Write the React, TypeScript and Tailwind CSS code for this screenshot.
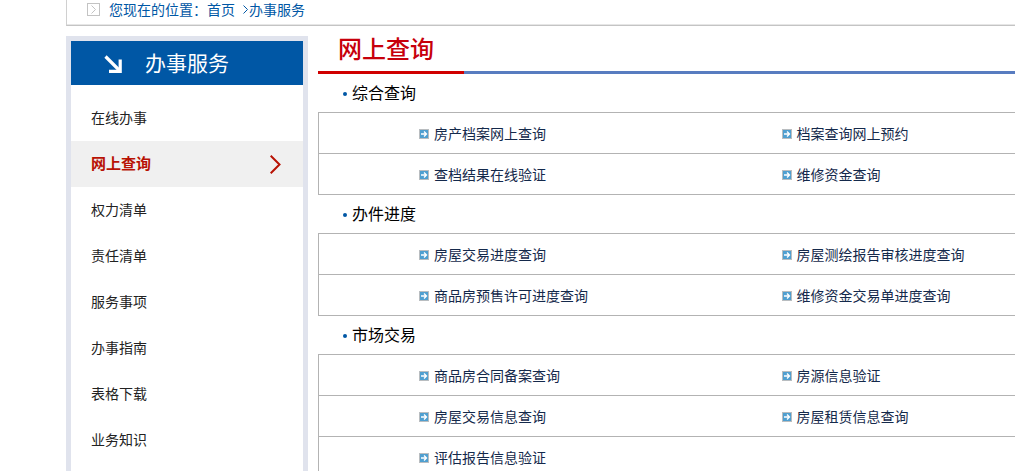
const menu = ["在线办事", "网上查询", "权力清单", "责任清单", "服务事项", "办事指南", "表格下载", "业务知识"];

const sections = [
  {
    title: "综合查询",
    rows: [
      ["房产档案网上查询", "档案查询网上预约"],
      ["查档结果在线验证", "维修资金查询"],
    ],
  },
  {
    title: "办件进度",
    rows: [
      ["房屋交易进度查询", "房屋测绘报告审核进度查询"],
      ["商品房预售许可进度查询", "维修资金交易单进度查询"],
    ],
  },
  {
    title: "市场交易",
    rows: [
      ["商品房合同备案查询", "房源信息验证"],
      ["房屋交易信息查询", "房屋租赁信息查询"],
      ["评估报告信息验证", ""],
    ],
  },
];

function ItemIcon() {
  return (
    <svg width="10" height="10" viewBox="0 0 10 10" className="shrink-0" aria-hidden="true">
      <rect width="10" height="10" fill="#b9bdc0" />
      <rect x="1" y="1" width="8" height="8" fill="#4f9fd0" />
      <path d="M2 5h5M5 2.5L7.5 5L5 7.5" stroke="#fff" strokeWidth="1.3" fill="none" />
    </svg>
  );
}

function Breadcrumb() {
  return (
    <nav className="flex h-[26px] items-start border-b border-l border-b-[#c4c4c4] border-l-[#d0d0d0] pl-5 text-sm/5 text-[#0057a5] shadow-[inset_0_-1px_0_#e6e6e6]">
      <svg width="13" height="13" viewBox="0 0 13 13" className="mt-[3px] mr-[9px] shrink-0" fill="none" stroke="#c3c3c3" aria-hidden="true">
        <rect x="0.5" y="0.5" width="12" height="12" />
        <path d="M4.5 2.5L8.5 6.5L4.5 10.5" />
      </svg>
      <span>您现在的位置：</span>
      <a href="#">首页</a>
      <svg width="5" height="9" viewBox="0 0 5 9" className="mt-[5px] mr-px ml-2 shrink-0" fill="none" stroke="#0057a5" aria-hidden="true">
        <path d="M0.5 0.5L4.5 4.5L0.5 8.5" />
      </svg>
      <a href="#">办事服务</a>
    </nav>
  );
}

function Sidebar() {
  return (
    <aside className="w-[242px] shrink-0 border-[5px] border-[#e0e3ed]">
      <h2 className="flex h-11 items-center bg-[#0057a5] pt-0.5 pl-[33px] text-[21px] text-white">
        <svg width="19" height="19" viewBox="0 0 19 19" className="mr-[22px]" fill="none" stroke="#fff" strokeWidth="3.2" aria-hidden="true">
          <path d="M1.5 1.5L15 15" />
          <path d="M16.2 4.5V16.3H5" />
        </svg>
        办事服务
      </h2>
      <ul className="pt-2.5 pb-5">
        {menu.map((name) =>
          name === "网上查询" ? (
            <li key={name}>
              <a href="#" className="flex h-[46px] items-center justify-between bg-[#f0f0f0] pr-[22px] pl-5 text-[15px] font-bold text-[#b81204]">
                {name}
                <svg width="11" height="19" viewBox="0 0 11 19" fill="none" stroke="#b81204" strokeWidth="2" aria-hidden="true">
                  <path d="M0.7 0.7L9.5 9.5L0.7 18.3" />
                </svg>
              </a>
            </li>
          ) : (
            <li key={name}>
              <a href="#" className="flex h-[46px] items-center pl-5 text-sm text-[#222]">
                {name}
              </a>
            </li>
          ),
        )}
      </ul>
    </aside>
  );
}

function ItemLink({ name }: { name: string }) {
  return (
    <a href="#" className="flex items-center gap-[5px] pl-[100px] whitespace-nowrap">
      <ItemIcon />
      {name}
    </a>
  );
}

export default function App() {
  return (
    <div className="min-h-screen overflow-x-hidden bg-white pl-[66px] font-['Liberation_Sans','Noto_Sans_CJK_SC',sans-serif]">
      <Breadcrumb />
      <div className="flex items-stretch gap-2.5 pt-2.5">
        <Sidebar />
        <main className="min-w-0 flex-1">
          <h1 className="flex h-[35px] items-start pt-0.5 pl-5 text-2xl/6 font-medium text-[#c7000b]">网上查询</h1>
          <div className="h-[3px] bg-[#587cc0]">
            <div className="h-full w-[146px] bg-[#d00000]" />
          </div>
          {sections.map((section) => (
            <section key={section.title}>
              <h2 className="flex h-[38px] items-center gap-[5px] pt-0.5 pl-[25px] text-base text-black">
                <span className="size-1 rounded-full bg-[#0057a5]" />
                {section.title}
              </h2>
              <table className="w-full table-fixed border-collapse border-y border-l border-[#b3b3b3] text-sm text-[#14294b]">
                <colgroup>
                  <col className="w-[363px]" />
                  <col />
                </colgroup>
                <tbody>
                  {section.rows.map(([left, right]) => (
                    <tr key={left} className="h-[41px] border-b border-[#b3b3b3]">
                      <td className="px-0 pt-0.5 pb-0">
                        <ItemLink name={left} />
                      </td>
                      <td className="px-0 pt-0.5 pb-0">{right && <ItemLink name={right} />}</td>
                    </tr>
                  ))}
                </tbody>
              </table>
            </section>
          ))}
        </main>
      </div>
    </div>
  );
}
